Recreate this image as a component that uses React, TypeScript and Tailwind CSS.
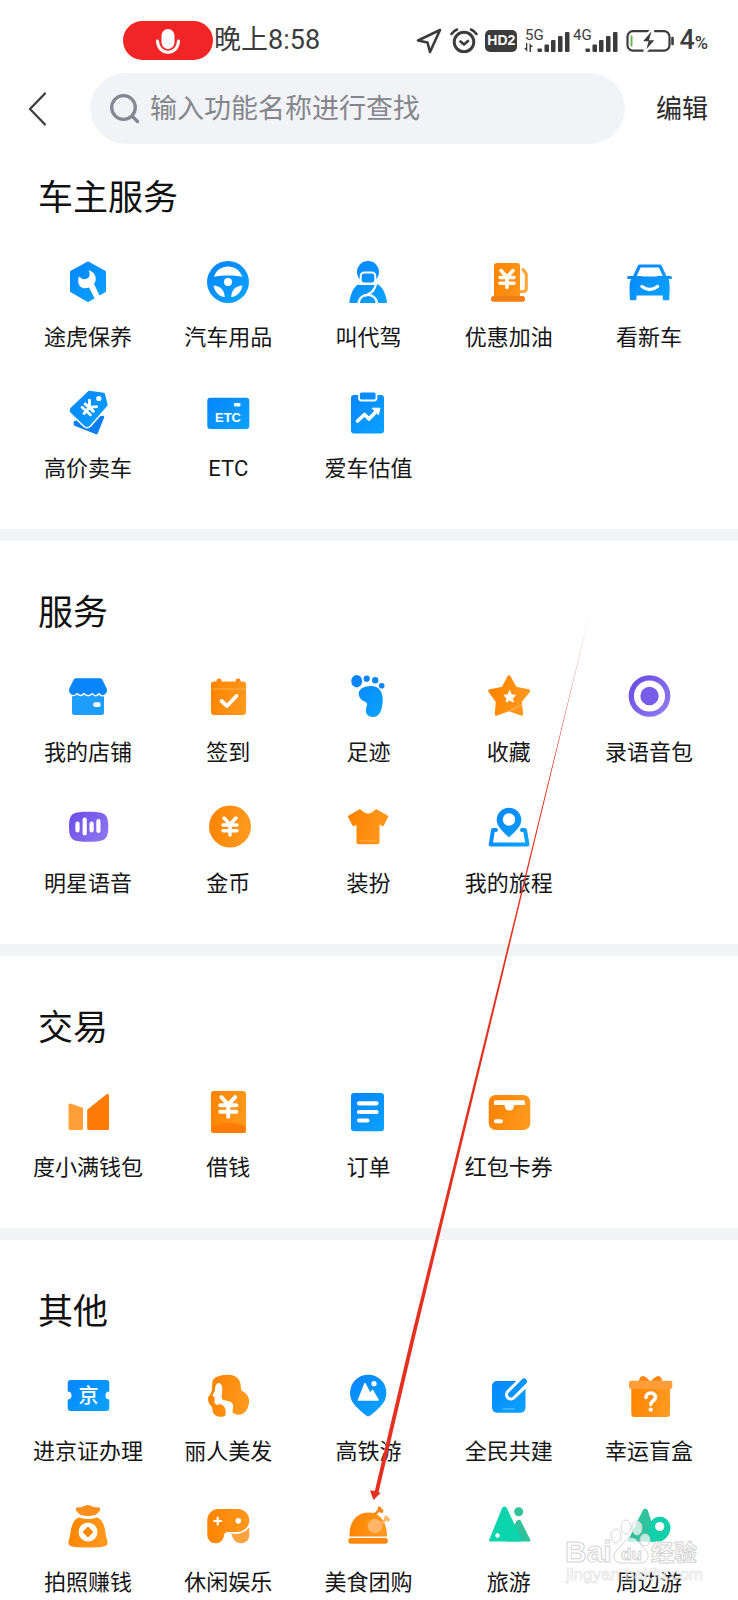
import type { ReactNode } from 'react';

type Item = { label: string; icon: ReactNode };
type Section = { title: string; items: Item[] };

const BLUE = 'url(#g-blue)';
const ORANGE = 'url(#g-orange)';
const PURPLE = 'url(#g-purple)';

// shared gradients, every icon below refers to these by id
function Gradients() {
  return (
    <svg className="absolute size-0" aria-hidden="true">
      <defs>
        <linearGradient id="g-blue" gradientUnits="userSpaceOnUse" x1="4" y1="4" x2="40" y2="42">
          <stop offset="0" stopColor="#0785fb" />
          <stop offset="1" stopColor="#0aa4ff" />
        </linearGradient>
        <linearGradient id="g-orange" gradientUnits="userSpaceOnUse" x1="4" y1="22" x2="42" y2="30">
          <stop offset="0" stopColor="#fd8502" />
          <stop offset="1" stopColor="#ff9a1f" />
        </linearGradient>
        <linearGradient id="g-purple" gradientUnits="userSpaceOnUse" x1="2" y1="6" x2="42" y2="38">
          <stop offset="0" stopColor="#6a4be6" />
          <stop offset="1" stopColor="#917af2" />
        </linearGradient>
        <linearGradient id="g-arrow" gradientUnits="userSpaceOnUse" x1="592" y1="604" x2="550" y2="780">
          <stop offset="0" stopColor="#e5301f" stopOpacity="0.4" />
          <stop offset="1" stopColor="#e5301f" />
        </linearGradient>
      </defs>
    </svg>
  );
}

function Glyph({ children }: { children: ReactNode }) {
  return (
    <svg viewBox="0 0 44 44" className="size-11 overflow-visible" fill="none" strokeLinecap="round" strokeLinejoin="round" aria-hidden="true">
      {children}
    </svg>
  );
}

function Yen({ transform }: { transform: string }) {
  return (
    <path
      transform={transform}
      d="M-6-8.5 0-2 6-8.5M0-2V8.5M-7-1.5H7M-7 4.2H7"
      stroke="#fff"
      strokeWidth="3.5"
    />
  );
}

const SECTIONS: Section[] = [
  {
    title: '车主服务',
    items: [
      {
        label: '途虎保养',
        icon: (
          <>
            <path d="M22 3 38.500 12V31L22 40.500 5.500 31V12Z" fill={BLUE} stroke={BLUE} strokeWidth="3" />
            <path d="M12.200 20C12 28 18 29.500 23 27.500L29.500 40 34.500 37.500 28 24C31.500 19.500 30 12 22.500 10.200 23.500 12.500 24.500 15 22.500 17.500 20 20 16 19.500 14.500 17.500 13.500 16 12.300 17 12.200 20Z" fill="#fff" />
          </>
        ),
      },
      {
        label: '汽车用品',
        icon: (
          <>
            <circle cx="22" cy="22" r="21" fill={BLUE} />
            <path d="M8 16.800C12 3 32 3 36.300 16.800 28 15 16 15 8 16.800Z" fill="#fff" />
            <path d="M7.500 25.500C14 26 18.300 29 18.800 37 13 36.500 8.500 32 7.500 25.500ZM36.500 25.500C30 26 25.700 29 25.200 37 31 36.500 35.500 32 36.500 25.500Z" fill="#fff" />
            <circle cx="22" cy="22" r="4" fill="#fff" />
          </>
        ),
      },
      {
        label: '叫代驾',
        icon: (
          <>
            <circle cx="22" cy="12" r="11" fill={BLUE} />
            <path d="M3.300 41.500C5 33 8 26 13 24H31C36 26 39.500 33 41 41.500Q41 43 39.500 43H5Q3.300 43 3.300 41.500Z" fill={BLUE} />
            <rect x="14.700" y="12.500" width="14.600" height="11" rx="3.500" fill={BLUE} stroke="#fff" strokeWidth="2" />
            <path d="M13 24H30C29 30 26 33 20 35.500" stroke="#fff" strokeWidth="2.200" />
            <path d="M12.500 43.500C13 32 30.500 32 31 43.500" stroke="#fff" strokeWidth="2.200" />
          </>
        ),
      },
      {
        label: '优惠加油',
        icon: (
          <>
            <rect x="7" y="3" width="26" height="36" rx="3" fill={ORANGE} />
            <rect x="4" y="36" width="34" height="5.700" rx="2.500" fill="#f07f14" />
            <path d="M36 9.500 39.300 14V28.500Q39.300 31.500 36 31.500H34" stroke="#ffa534" strokeWidth="3" />
            <Yen transform="translate(20 19)" />
          </>
        ),
      },
      {
        label: '看新车',
        icon: (
          <>
            <path d="M12.500 6H33L38.500 18H7Z" stroke={BLUE} strokeWidth="3.200" />
            <path d="M1.500 17.500H14M31 17.500H43.500" stroke="#0990fd" strokeWidth="3" />
            <path d="M5 17H41Q43 22 42.700 28L42.300 39Q42.300 40.300 41 40.300H37Q35.700 40.300 35.700 39V35.500H9.500V39Q9.500 40.300 8 40.300H4Q2.800 40.300 2.800 39L2.500 27Q2.500 21 5 17Z" fill={BLUE} />
            <path d="M15 26.500Q22.700 32.500 30.500 26.500" stroke="#fff" strokeWidth="3.400" />
          </>
        ),
      },
      {
        label: '高价卖车',
        icon: (
          <>
            <path d="M9 31V33.500L30.500 42 37 26Z" fill="#0a7df5" stroke="#0a7df5" strokeWidth="2.500" />
            <path d="M23 .5 38 2.500 41 14 23.500 34Q21 36.500 18.500 34L5.500 21.500Q3.500 19.500 5.500 17Z" fill={BLUE} stroke="#fff" strokeWidth="4.500" />
            <path d="M23 .5 38 2.500 41 14 23.500 34Q21 36.500 18.500 34L5.500 21.500Q3.500 19.500 5.500 17Z" fill={BLUE} stroke={BLUE} strokeWidth="1.500" />
            <circle cx="32.800" cy="7.500" r="2.600" fill="#fff" />
            <Yen transform="translate(22.500 17.500) rotate(42) scale(.8)" />
          </>
        ),
      },
      {
        label: 'ETC',
        icon: (
          <>
            <rect x="1.300" y="6.700" width="42" height="31.300" rx="3" fill={BLUE} />
            <rect x="28" y="12" width="6.500" height="3.600" rx="1" fill="#fff" />
            <text x="22" y="31" textAnchor="middle" fill="#fff" className="font-['Liberation_Sans',sans-serif] text-[13px] font-bold">ETC</text>
          </>
        ),
      },
      {
        label: '爱车估值',
        icon: (
          <>
            <rect x="5" y="4" width="33" height="38.500" rx="3" fill={BLUE} />
            <rect x="13" y=".5" width="17.500" height="9" rx="2.500" fill={BLUE} stroke="#fff" strokeWidth="1.800" />
            <path d="M11.500 30 18.500 23.500 23 28 31 19.500" stroke="#fff" strokeWidth="3.600" />
            <path d="M26.500 17.200H34L32.500 23.500Z" fill="#fff" stroke="#fff" />
          </>
        ),
      },
    ],
  },
  {
    title: '服务',
    items: [
      {
        label: '我的店铺',
        icon: (
          <>
            <path d="M6 18H38V37.500Q38 40 35.500 40H8.500Q6 40 6 37.500Z" fill="#1f9dfb" />
            <path d="M10 2.700H34Q36 2.700 37 4.500L41.200 13Q43 18 38 20.500 34 21.500 33 18.500 29.500 23 26.500 18.500 22 23 18 18.500 15 22.500 11 18.500 10 21 6 20.500 1 18 2.800 13L7 4.500Q8 2.700 10 2.700Z" fill="#0785fb" stroke="#fff" strokeWidth="1.300" />
            <rect x="27.300" y="27.300" width="7.300" height="4.700" rx="2" fill="#fff" />
          </>
        ),
      },
      {
        label: '签到',
        icon: (
          <>
            <circle cx="13" cy="6" r="2.500" fill="#f98410" />
            <circle cx="32" cy="6" r="2.500" fill="#f98410" />
            <rect x="5" y="6.500" width="35" height="33.500" rx="3" fill={ORANGE} />
            <path d="M5.500 14H39.500" stroke="#ffb860" strokeWidth=".8" />
            <path d="M15.500 26 21 31 30.500 21" stroke="#fff" strokeWidth="3.800" />
          </>
        ),
      },
      {
        label: '足迹',
        icon: (
          <>
            <ellipse cx="10.700" cy="6.200" rx="5.400" ry="6.200" fill="#0785fb" />
            <circle cx="20.700" cy="3.700" r="3.100" fill="#0785fb" />
            <circle cx="29.200" cy="5.300" r="3.200" fill="#0785fb" />
            <circle cx="35.700" cy="10.700" r="2.800" fill="#0785fb" />
            <path d="M25 11C33 11 37 17 36.700 25 36.500 36 33 42 27 42 21.500 42 19 38 20 34 20.500 31 22 29 20 27.200 16 25.500 12.700 23 12.700 18.500 12.700 14 18 11 25 11Z" fill={BLUE} />
          </>
        ),
      },
      {
        label: '收藏',
        icon: (
          <>
            <path d="M22 2 28.500 13.500 41.500 16 33 26.500 34.500 39 22 34.500 9.500 39 10.500 26.500 3 16 16 13.500Z" fill={ORANGE} stroke={ORANGE} strokeWidth="3.400" />
            <path d="M23 36 35 29" stroke="#ffc27a" strokeWidth=".9" />
            <path d="M22.700 16 24.500 19.800 28.500 20.300 25.600 23.200 26.300 27 22.700 25.200 19.100 27 19.800 23.200 16.900 20.300 20.900 19.800Z" fill="#fff" stroke="#fff" />
          </>
        ),
      },
      {
        label: '录语音包',
        icon: (
          <>
            <circle cx="22.500" cy="21" r="18.200" stroke={PURPLE} strokeWidth="5.300" />
            <circle cx="22.500" cy="21" r="9.200" fill="#775be9" />
          </>
        ),
      },
      {
        label: '明星语音',
        icon: (
          <>
            <path d="M22.500 5.700C38 5.700 42.300 7 42.300 20.700S38 35.700 22.500 35.700 3 34.500 3 20.700 7 5.700 22.500 5.700Z" fill={PURPLE} />
            <path d="M11.500 17.500V24.500M18.700 13.500V27.500M25.600 17.500V24.500M32.400 15V25" stroke="#fff" strokeWidth="4.200" />
          </>
        ),
      },
      {
        label: '金币',
        icon: (
          <>
            <circle cx="24" cy="20.500" r="21" fill={ORANGE} />
            <Yen transform="translate(24 20.500)" />
          </>
        ),
      },
      {
        label: '装扮',
        icon: (
          <>
            <path d="M14 4Q22 12.500 30 4L41.500 10.500 37 19.500 32.700 17V36.500Q32.700 37.500 31.500 37.500H12.500Q11.300 37.500 11.300 36.500V17L7.500 19.500 2.700 10.500Z" fill={ORANGE} stroke={ORANGE} strokeWidth="1.600" />
            <path d="M14 34.800H30" stroke="#ffb860" strokeWidth=".8" />
          </>
        ),
      },
      {
        label: '我的旅程',
        icon: (
          <>
            <path d="M9 24H6L3.700 38.500H40.500L38 24H35" stroke={BLUE} strokeWidth="4" />
            <path d="M22 1.700A12.300 12.300 0 0 1 34.300 14C34.300 20.500 28 25.500 22 31.500 16 25.500 9.700 20.500 9.700 14A12.300 12.300 0 0 1 22 1.700Z" fill={BLUE} />
            <circle cx="22" cy="13.500" r="6.200" fill="#fff" />
          </>
        ),
      },
    ],
  },
  {
    title: '交易',
    items: [
      {
        label: '度小满钱包',
        icon: (
          <>
            <path d="M4 15 15.500 19V38.500H4Z" fill="#ff9f36" stroke="#ff9f36" strokeWidth="3" />
            <path d="M22.700 20.500 41.500 5.500V38.500H22.700Z" fill="#ff7a04" stroke="#ff7a04" strokeWidth="3" />
          </>
        ),
      },
      {
        label: '借钱',
        icon: (
          <>
            <rect x="5" y="1" width="35" height="42" rx="3" fill={ORANGE} />
            <path d="M5 37Q22.500 28 40 37V40Q40 43 37 43H8Q5 43 5 40Z" fill="#ff7c08" />
            <Yen transform="translate(22.300 17) scale(1.150)" />
          </>
        ),
      },
      {
        label: '订单',
        icon: (
          <>
            <rect x="5" y="3" width="33" height="38.300" rx="3" fill={BLUE} />
            <path d="M13 13.300H30.500M13 22H30.500M13 30.500H21.500" stroke="#fff" strokeWidth="4.200" />
          </>
        ),
      },
      {
        label: '红包卡券',
        icon: (
          <>
            <rect x="1.700" y="5" width="41.600" height="35" rx="7" fill={ORANGE} />
            <path d="M8.500 10.300H36.500Q38 10.300 38 12V15H27Q27 20.500 22.300 20.500T17.600 15H7V12Q7 10.300 8.500 10.300Z" fill="#fff" />
            <rect x="7" y="29.300" width="9" height="4" rx="1.800" fill="#fff" />
          </>
        ),
      },
    ],
  },
  {
    title: '其他',
    items: [
      {
        label: '进京证办理',
        icon: (
          <>
            <rect x="1.700" y="6" width="41.600" height="31" rx="3" fill={BLUE} />
            <circle cx="1.500" cy="21.500" r="4" fill="#fff" />
            <circle cx="43.500" cy="21.500" r="4" fill="#fff" />
            <text x="22.500" y="29" textAnchor="middle" fill="#fff" className="font-['Noto_Sans_CJK_SC',sans-serif] text-[20px] font-medium">京</text>
          </>
        ),
      },
      {
        label: '丽人美发',
        icon: (
          <>
            <path d="M12 2.500C18 0 31-1 34 8 35.500 12 34 14 36 17 43 20 44.500 27 42 33 39.500 41 32 42 29 39.500L20 41C17 44 11 43 8.500 40.500 6 38 7 35 5.500 32.500 2 29 .5 24 4 20.500 7 17 5.500 12 6.500 7.500 7.500 4 9.500 3 12 2.500Z" fill={ORANGE} />
            <path d="M12.500 9C10 9 9 13 9 16.500L6.300 21.800 8.500 23V28.500C9.500 31.500 12 30.800 14.500 30.300 18 31 20.500 35 19.500 41V44H27.500V40C25 36 29 32 26 29 23 26 19 27 16.500 25.500 14.500 22.500 17 18 16 13 15.500 10 14 9 12.500 9Z" fill="#fff" />
          </>
        ),
      },
      {
        label: '高铁游',
        icon: (
          <>
            <path d="M22.200.7A18.200 18.200 0 0 1 40.400 18.900C40.400 29 33 34 24 41.700Q22.200 43 20.400 41.700C11.500 34 4 29 4 18.900A18.200 18.200 0 0 1 22.200.7Z" fill={BLUE} />
            <path d="M12.500 26 19 9.500 24 19.500 26.500 16.500 32 26Z" fill="#fff" stroke="#fff" strokeWidth="1.500" />
            <circle cx="28" cy="9.700" r="2.600" fill="#fff" />
          </>
        ),
      },
      {
        label: '全民共建',
        icon: (
          <>
            <rect x="5" y="7" width="33.500" height="31.700" rx="5" fill={BLUE} />
            <path d="M24 20.500 39 6" stroke="#fff" strokeWidth="12" />
            <path d="M24 20.500 37 7.500" stroke={BLUE} strokeWidth="6" />
            <path d="M16 35H27" stroke="#8fd0ff" strokeWidth=".8" />
          </>
        ),
      },
      {
        label: '幸运盲盒',
        icon: (
          <>
            <path d="M12 8Q12 2 16 2 20 3 23.500 8 27 3 31 2 35 2 35 8Z" fill="#f98410" />
            <path d="M4.300 14H43V40Q43 43 40 43H7.300Q4.300 43 4.300 40Z" fill={ORANGE} />
            <rect x="2" y="6.700" width="43.300" height="8.200" rx="2" fill="#ff9d38" />
            <path d="M19 23.500C19 17.500 28.500 17.500 28.500 23.300 28.500 27 23.700 27 23.700 30.500" stroke="#fff" strokeWidth="3.600" />
            <circle cx="23.700" cy="35.700" r="2.100" fill="#fff" />
          </>
        ),
      },
      {
        label: '拍照赚钱',
        icon: (
          <>
            <path d="M14 9.500C11 7 8.500 5 10.500 2.500 13 1.500 15.500 3 17 1.500Q22-1.500 26.500 1.500C28.500 3 31 1.500 33.500 2.500 35.500 5 33 7 30 9.500Q22 12.500 14 9.500Z" fill="#fb8f1d" />
            <path d="M13 12.500Q22 15.500 31 12.500C37 14.500 39 22 40 31 40.500 34 42.500 36.500 41 40Q39 42.500 22 42.500T3 40C1.500 36.500 3.500 34 4 31 5 22 7 14.500 13 12.500Z" fill={ORANGE} />
            <circle cx="22" cy="27" r="9.500" fill="#fff" />
            <path d="M22 22.500 26.500 27 22 31.500 17.500 27Z" fill="#fb8a0c" stroke="#fb8a0c" strokeWidth="1.500" />
          </>
        ),
      },
      {
        label: '休闲娱乐',
        icon: (
          <>
            <path d="M25.500 28.500C33 30 40 27 43.300 22.500V30C43.300 35.500 39.500 38.300 35 38.300 30 38.300 26.500 34.500 25.500 28.500Z" fill="#ffa242" />
            <path d="M12.500 4H32A11.500 11.500 0 0 1 43.300 15.500C43.300 22 37.500 27 31 27H22.500Q18.500 27 18 30C17.500 35.500 14 38.300 9.700 38.300 4.500 38.300 1.300 34.500 1.300 30V15A11.200 11.200 0 0 1 12.500 4Z" fill={ORANGE} />
            <path d="M11.700 12.500V19.500M8.200 16H15.200" stroke="#fff" strokeWidth="2.200" />
            <circle cx="32.300" cy="15.700" r="2.800" fill="#fff" />
          </>
        ),
      },
      {
        label: '美食团购',
        icon: (
          <>
            <path d="M28 10 34 4.500" stroke="#f98410" strokeWidth="2.600" />
            <circle cx="33.500" cy="3.500" r="1.900" fill="#f98410" />
            <circle cx="35.500" cy="6" r="1.900" fill="#f98410" />
            <path d="M3.500 31.500C3 16 11 7.500 23 7.500 33 7.500 41 16 41 31.500Z" fill={ORANGE} />
            <rect x="2.300" y="33" width="39.500" height="5.700" rx="2.500" fill="#fb8a0c" />
            <path d="M31 23 40 14" stroke="#ffb566" strokeWidth="2.600" />
            <circle cx="40" cy="12.500" r="1.900" fill="#ffb566" />
            <circle cx="42" cy="14.500" r="1.900" fill="#ffb566" />
            <ellipse cx="29" cy="21" rx="7.500" ry="7" fill="#ffb566" />
          </>
        ),
      },
      {
        label: '旅游',
        icon: (
          <>
            <path d="M20 35.500 30.500 16.500Q31.700 15 33 16.500L42.500 35.500Z" fill="#2fc29c" stroke="#2fc29c" strokeWidth="2" />
            <path d="M3 35.500 16 3.500Q17.500 1.500 19 3.500L34 35.500Z" fill="#0cd5ae" stroke="#0cd5ae" strokeWidth="2" />
            <circle cx="31.700" cy="6.800" r="4.500" fill="#2fc29c" />
            <circle cx="10.500" cy="30.500" r="2.200" fill="#fff" />
          </>
        ),
      },
      {
        label: '周边游',
        icon: (
          <>
            <path d="M1.500 36 16.500 5.500Q18.300 3 20 5.500L30 36Z" fill="#2fc29c" stroke="#2fc29c" strokeWidth="1.500" />
            <path d="M21 36.500H34C39 34 43.500 29 43.500 22.500A10.700 10.700 0 0 0 22 22.500Z" fill="#12d0aa" />
            <circle cx="32.700" cy="21.500" r="4.600" fill="#fff" />
          </>
        ),
      },
    ],
  },
];

function Signal({ label, arrows }: { label: string; arrows?: boolean }) {
  return (
    <svg viewBox="0 0 46 26" className="h-[26px] w-[46px] overflow-visible" fill="#3c3c3c" aria-label={label}>
      <text x="1" y="12" className="font-[Roboto,sans-serif] text-[15px]">{label}</text>
      {arrows && <path d="M3.300 15V24L.2 20H2V15ZM5.500 24V15L9 19H7V24Z" />}
      <rect x="13.500" y="20.500" width="4.500" height="3.500" rx="1" />
      <rect x="20.500" y="16.500" width="4.500" height="7.500" rx="1" />
      <rect x="27" y="12" width="4.500" height="12" rx="1" />
      <rect x="34" y="8" width="4.500" height="16" rx="1" />
      <rect x="41" y="4" width="4.500" height="20" rx="1" />
    </svg>
  );
}

function StatusBar() {
  return (
    <div className="flex h-[60px] items-end justify-between pr-[30px] pl-[123px] text-[#3c3c3c]">
      <div className="flex h-[39px] items-center">
        <span className="flex h-[39px] w-[90px] items-center justify-center rounded-full bg-[#f12525]">
          <svg viewBox="0 0 24 28" className="h-7 w-6" fill="none" aria-hidden="true">
            <rect x="5.500" y="2" width="13" height="20" rx="6.500" fill="#fff" />
            <path d="M1.500 14C2 29 22 29 22.500 14" stroke="#fff" strokeWidth="3" strokeLinecap="round" />
          </svg>
        </span>
        <span className="ml-px text-[27px] leading-none">晚上8:58</span>
      </div>
      <div className="flex h-[39px] items-center">
        <svg viewBox="0 0 26 26" className="size-[26px]" fill="none" stroke="#3c3c3c" strokeWidth="2.600" strokeLinejoin="round" aria-hidden="true">
          <path d="M24 2 2 12.500 11.500 14.500 14 24Z" />
        </svg>
        <svg viewBox="0 0 28 26" className="ml-2 h-[26px] w-7" fill="none" stroke="#3c3c3c" strokeWidth="3" strokeLinecap="round" strokeLinejoin="round" aria-hidden="true">
          <circle cx="14" cy="14" r="9.800" />
          <path d="M10.500 13.500 14 16.500 18 13M1.500 6Q3.500 3 7 1.500M26.500 6Q24.500 3 21 1.500" strokeWidth="2.600" />
        </svg>
        <span className="ml-[7px] flex h-[22px] w-8 items-center justify-center rounded-[5px] bg-[#3c3c3c] font-['Liberation_Sans',sans-serif] text-[14px] font-bold text-white">HD2</span>
        <span className="ml-[7px]"><Signal label="5G" arrows /></span>
        <span className="ml-[2px]"><Signal label="4G" /></span>
        <svg viewBox="0 0 48 24" className="ml-2 h-6 w-12" fill="none" aria-hidden="true">
          <rect x="1.500" y="2.200" width="42" height="19.500" rx="5.500" stroke="#3c3c3c" strokeWidth="2.200" />
          <path d="M46.500 9V15" stroke="#3c3c3c" strokeWidth="2.600" strokeLinecap="round" />
          <path d="M5.500 6.500V17.500" stroke="#6fb55a" strokeWidth="2" />
          <path d="M26 0 14.500 13.500H21L18 24.500 31 10H24.500L27.500 0Z" fill="#3c3c3c" stroke="#fff" strokeWidth="2.400" />
        </svg>
        <span className="ml-[5px] flex items-baseline leading-none font-medium">
          <span className="text-[27px]">4</span>
          <span className="text-[18px]">%</span>
        </span>
      </div>
    </div>
  );
}

function SearchHeader() {
  return (
    <header className="mt-[13px] flex h-[71px] items-center pr-[30px] pl-7">
      <button type="button" aria-label="返回" className="w-[62px]">
        <svg viewBox="0 0 18 34" className="h-[34px] w-[18px]" fill="none" stroke="#3f3f3f" strokeWidth="2.400" strokeLinecap="round" strokeLinejoin="round" aria-hidden="true">
          <path d="M17 1.500 2 17 17 32.500" />
        </svg>
      </button>
      <label className="flex h-full flex-1 items-center rounded-full bg-[#f2f3f7] pl-5">
        <svg viewBox="0 0 30 30" className="size-[30px] shrink-0" fill="none" stroke="#858893" strokeWidth="3.300" strokeLinecap="round" aria-hidden="true">
          <circle cx="13.500" cy="13.500" r="11.800" />
          <path d="M22.500 22.500 27.500 27.500" />
        </svg>
        <input
          type="search"
          aria-label="搜索功能"
          placeholder="输入功能名称进行查找"
          className="ml-[10px] w-full min-w-0 bg-transparent pt-0.5 text-[27px] text-[#333] outline-none placeholder:text-[#84868c]"
        />
      </label>
      <button type="button" className="ml-[31px] pt-0.5 text-[26px] text-[#2b2b2b]">编辑</button>
    </header>
  );
}

function ServiceSection({ title, items }: Section) {
  return (
    <section className="pt-[49px] pb-[44px] first:pt-[31px] last:pb-0">
      <h2 className="pl-[38px] text-[35px] leading-[48px] text-[#111]">{title}</h2>
      <ul className="mt-[37px] grid grid-cols-5 gap-y-[37px] pr-[19px] pl-[18px]">
        {items.map((item) => (
          <li key={item.label}>
            <button type="button" className="flex w-full flex-col items-center gap-[18px]">
              <Glyph>{item.icon}</Glyph>
              <span className="text-[22px] leading-8 whitespace-nowrap text-[#151515]">{item.label}</span>
            </button>
          </li>
        ))}
      </ul>
    </section>
  );
}

// red pointer and the site stamp, drawn over the page
function Annotations() {
  return (
    <svg viewBox="0 0 738 1600" className="pointer-events-none absolute top-0 left-0 w-full" aria-hidden="true">
      <path d="M592 604 496.500 1000 414.300 1340 378.500 1492.500 374.700 1491.500 410.700 1339 494.500 1000Z" fill="url(#g-arrow)" />
      <path d="M370 1490.500 376.500 1491 380.500 1493 373.500 1500Z" fill="#e5301f" />
      <g fill="#fff" fillOpacity=".7" stroke="#d4d4d4" strokeWidth="1">
        <ellipse cx="616" cy="1536" rx="5" ry="7" />
        <ellipse cx="626" cy="1527" rx="5" ry="7" />
        <ellipse cx="637" cy="1528" rx="5" ry="7" />
        <ellipse cx="645" cy="1540" rx="5" ry="6" />
        <path d="M631 1538C637 1538 640 1545 645 1549 651 1555 648 1563 640 1563 634 1563 628 1563 622 1563 614 1563 611 1556 617 1550 622 1546 625 1538 631 1538Z" />
        <text x="565" y="1562" className="font-['Liberation_Sans',sans-serif] text-[30px] font-bold">Bai</text>
        <text x="621" y="1560" className="font-['Liberation_Sans',sans-serif] text-[17px] font-bold">du</text>
        <text x="651" y="1561" className="font-['Noto_Sans_CJK_SC',sans-serif] text-[23px] font-bold">经验</text>
        <text x="566" y="1580" strokeOpacity=".5" className="font-['Liberation_Sans',sans-serif] text-[17px]">jingyan.baidu.com</text>
      </g>
    </svg>
  );
}

export default function App() {
  return (
    <div className="relative min-h-screen bg-white font-[Roboto,'Noto_Sans_CJK_SC',sans-serif]">
      <Gradients />
      <StatusBar />
      <SearchHeader />
      <main className="divide-y-[12px] divide-[#f2f4f6]">
        {SECTIONS.map((s) => (
          <ServiceSection key={s.title} title={s.title} items={s.items} />
        ))}
      </main>
      <Annotations />
    </div>
  );
}
